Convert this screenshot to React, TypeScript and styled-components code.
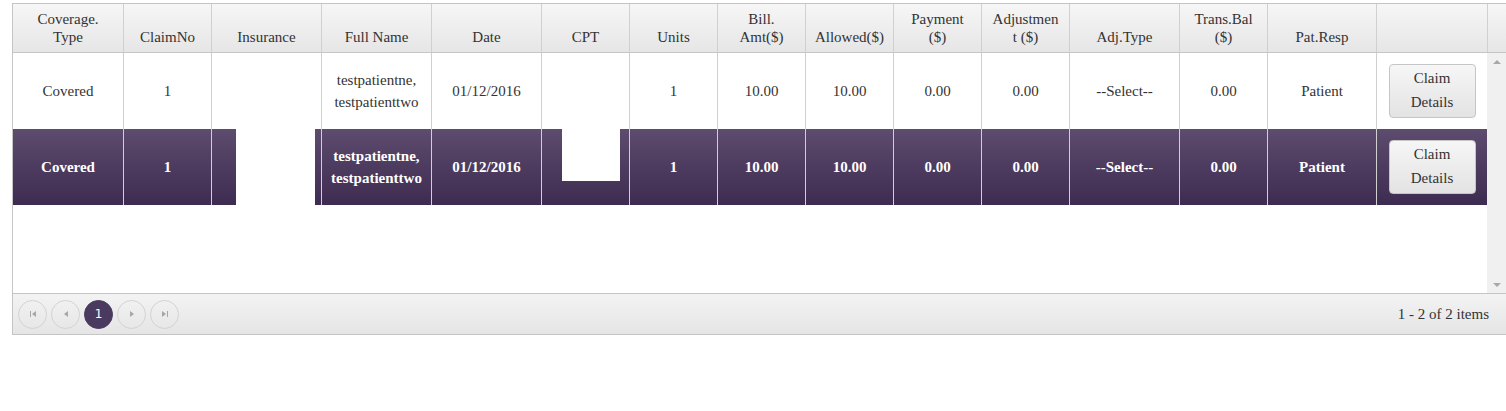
import React from "react";
import styled, { createGlobalStyle, css } from "styled-components";

const GlobalStyle = createGlobalStyle`
  html, body {
    margin: 0;
    padding: 0;
    background: #ffffff;
    overflow: hidden;
  }
  body {
    font-family: "Liberation Serif", "DejaVu Serif", serif;
    color: #333333;
  }
`;

const COLS = [110, 88, 110, 110, 110, 88, 88, 88, 88, 88, 88, 110, 88, 109, 111];
const template = COLS.map((w) => `${w}px`).join(" ");

const Page = styled.div`
  padding: 3px 0 0 12px;
  width: 1506px;
  box-sizing: border-box;
`;

const Grid = styled.div`
  width: 1495px;
  border: 1px solid #c5c5c5;
  box-sizing: border-box;
  background: #ffffff;
`;

const HeaderRow = styled.div`
  display: grid;
  grid-template-columns: ${template} 1fr;
  height: 49px;
  border-bottom: 1px solid #c5c5c5;
  box-sizing: border-box;
  background: linear-gradient(#f6f6f6, #e6e6e6);
`;

const HeaderCell = styled.div<{ $first?: boolean }>`
  display: flex;
  align-items: flex-end;
  justify-content: center;
  text-align: center;
  padding: 0 4px 6px;
  font-size: 15px;
  line-height: 18px;
  color: #333333;
  border-left: ${(p) => (p.$first ? "none" : "1px solid #d0d0d0")};
  box-sizing: border-box;
  overflow: hidden;
  white-space: nowrap;
`;

const BodyArea = styled.div`
  display: flex;
  height: 240px;
`;

const Rows = styled.div`
  width: 1474px;
  display: flex;
  flex-direction: column;
`;

const Row = styled.div<{ $selected?: boolean }>`
  display: grid;
  grid-template-columns: ${template};
  height: 76px;
  ${(p) =>
    p.$selected
      ? css`
          background: linear-gradient(#5d4c6e, #3e2b51);
          color: #ffffff;
          font-weight: bold;
        `
      : css`
          background: #ffffff;
          color: #333333;
        `}
`;

const Cell = styled.div<{ $first?: boolean }>`
  position: relative;
  display: flex;
  align-items: center;
  justify-content: center;
  text-align: center;
  padding: 0 4px;
  font-size: 15px;
  line-height: 22px;
  border-left: ${(p) => (p.$first ? "none" : "1px solid #d0d0d0")};
  box-sizing: border-box;
`;

const Mask = styled.div<{ $left: number; $width: number; $height: number }>`
  position: absolute;
  top: 0;
  left: ${(p) => p.$left}px;
  width: ${(p) => p.$width}px;
  height: ${(p) => p.$height}px;
  background: #ffffff;
`;

const DetailsButton = styled.button`
  width: 87px;
  height: 54px;
  border: 1px solid #c5c5c5;
  border-radius: 4px;
  background: linear-gradient(#f6f6f6, #e3e3e3);
  font-family: "Liberation Serif", "DejaVu Serif", serif;
  font-size: 15px;
  font-weight: normal;
  line-height: 24px;
  color: #333333;
  padding: 0 0 2px;
  cursor: pointer;
`;

const ScrollBar = styled.div`
  width: 19px;
  background: #f0f0f0;
  display: flex;
  flex-direction: column;
  justify-content: space-between;
  align-items: center;
  padding: 7px 0 6px;
  box-sizing: border-box;
`;

const Arrow = styled.div<{ $down?: boolean }>`
  width: 0;
  height: 0;
  border-left: 4px solid transparent;
  border-right: 4px solid transparent;
  ${(p) =>
    p.$down
      ? "border-top: 4px solid #a8a8a8;"
      : "border-bottom: 4px solid #a8a8a8;"}
`;

const Pager = styled.div`
  display: flex;
  align-items: center;
  height: 41px;
  border-top: 1px solid #c5c5c5;
  box-sizing: border-box;
  padding: 0 17px 0 5px;
  background: linear-gradient(#f3f3f3, #e5e5e5);
`;

const PagerButtons = styled.div`
  display: flex;
  gap: 4px;
`;

const PageButton = styled.div<{ $current?: boolean }>`
  width: 29px;
  height: 29px;
  border-radius: 50%;
  box-sizing: border-box;
  display: flex;
  align-items: center;
  justify-content: center;
  font-family: "DejaVu Sans", "Open Sans", sans-serif;
  font-size: 12px;
  ${(p) =>
    p.$current
      ? css`
          background: #4a3a5f;
          border: 1px solid #4a3a5f;
          color: #ffffff;
        `
      : css`
          border: 1px solid #d3d3d3;
          color: #a0a0a0;
        `}
`;

const PagerInfo = styled.div`
  margin-left: auto;
  font-size: 15px;
  color: #333333;
`;

function PagerIcon({ kind }: { kind: "first" | "prev" | "next" | "last" }) {
  const fill = "#a6a6a6";
  return (
    <svg width="10" height="10" viewBox="0 0 10 10">
      {kind === "first" && (
        <>
          <rect x="2" y="2" width="1" height="6" fill={fill} />
          <polygon points="8,2 4,5 8,8" fill={fill} />
        </>
      )}
      {kind === "prev" && <polygon points="7,2 3,5 7,8" fill={fill} />}
      {kind === "next" && <polygon points="3,2 7,5 3,8" fill={fill} />}
      {kind === "last" && (
        <>
          <polygon points="2,2 6,5 2,8" fill={fill} />
          <rect x="7" y="2" width="1" height="6" fill={fill} />
        </>
      )}
    </svg>
  );
}

const headers: string[][] = [
  ["Coverage.", "Type"],
  ["ClaimNo"],
  ["Insurance"],
  ["Full Name"],
  ["Date"],
  ["CPT"],
  ["Units"],
  ["Bill.", "Amt($)"],
  ["Allowed($)"],
  ["Payment", "($)"],
  ["Adjustmen", "t ($)"],
  ["Adj.Type"],
  ["Trans.Bal", "($)"],
  ["Pat.Resp"],
  [],
];

function DataRow({ selected }: { selected?: boolean }) {
  const values: React.ReactNode[] = [
    "Covered",
    "1",
    "",
    <>
      testpatientne,
      <br />
      testpatienttwo
    </>,
    "01/12/2016",
    "",
    "1",
    "10.00",
    "10.00",
    "0.00",
    "0.00",
    "--Select--",
    "0.00",
    "Patient",
  ];
  return (
    <Row $selected={selected}>
      {values.map((v, i) => (
        <Cell key={i} $first={i === 0}>
          {v}
          {selected && i === 2 && <Mask $left={24} $width={79} $height={76} />}
          {selected && i === 5 && <Mask $left={20} $width={58} $height={52} />}
        </Cell>
      ))}
      <Cell>
        <DetailsButton>
          Claim
          <br />
          Details
        </DetailsButton>
      </Cell>
    </Row>
  );
}

export default function App() {
  return (
    <>
      <GlobalStyle />
      <Page>
        <Grid>
          <HeaderRow>
            {headers.map((lines, i) => (
              <HeaderCell key={i} $first={i === 0}>
                <span>
                  {lines.map((l, j) => (
                    <React.Fragment key={j}>
                      {j > 0 && <br />}
                      {l}
                    </React.Fragment>
                  ))}
                </span>
              </HeaderCell>
            ))}
            <HeaderCell />
          </HeaderRow>
          <BodyArea>
            <Rows>
              <DataRow />
              <DataRow selected />
            </Rows>
            <ScrollBar>
              <Arrow />
              <Arrow $down />
            </ScrollBar>
          </BodyArea>
          <Pager>
            <PagerButtons>
              <PageButton>
                <PagerIcon kind="first" />
              </PageButton>
              <PageButton>
                <PagerIcon kind="prev" />
              </PageButton>
              <PageButton $current>1</PageButton>
              <PageButton>
                <PagerIcon kind="next" />
              </PageButton>
              <PageButton>
                <PagerIcon kind="last" />
              </PageButton>
            </PagerButtons>
            <PagerInfo>1 - 2 of 2 items</PagerInfo>
          </Pager>
        </Grid>
      </Page>
    </>
  );
}
